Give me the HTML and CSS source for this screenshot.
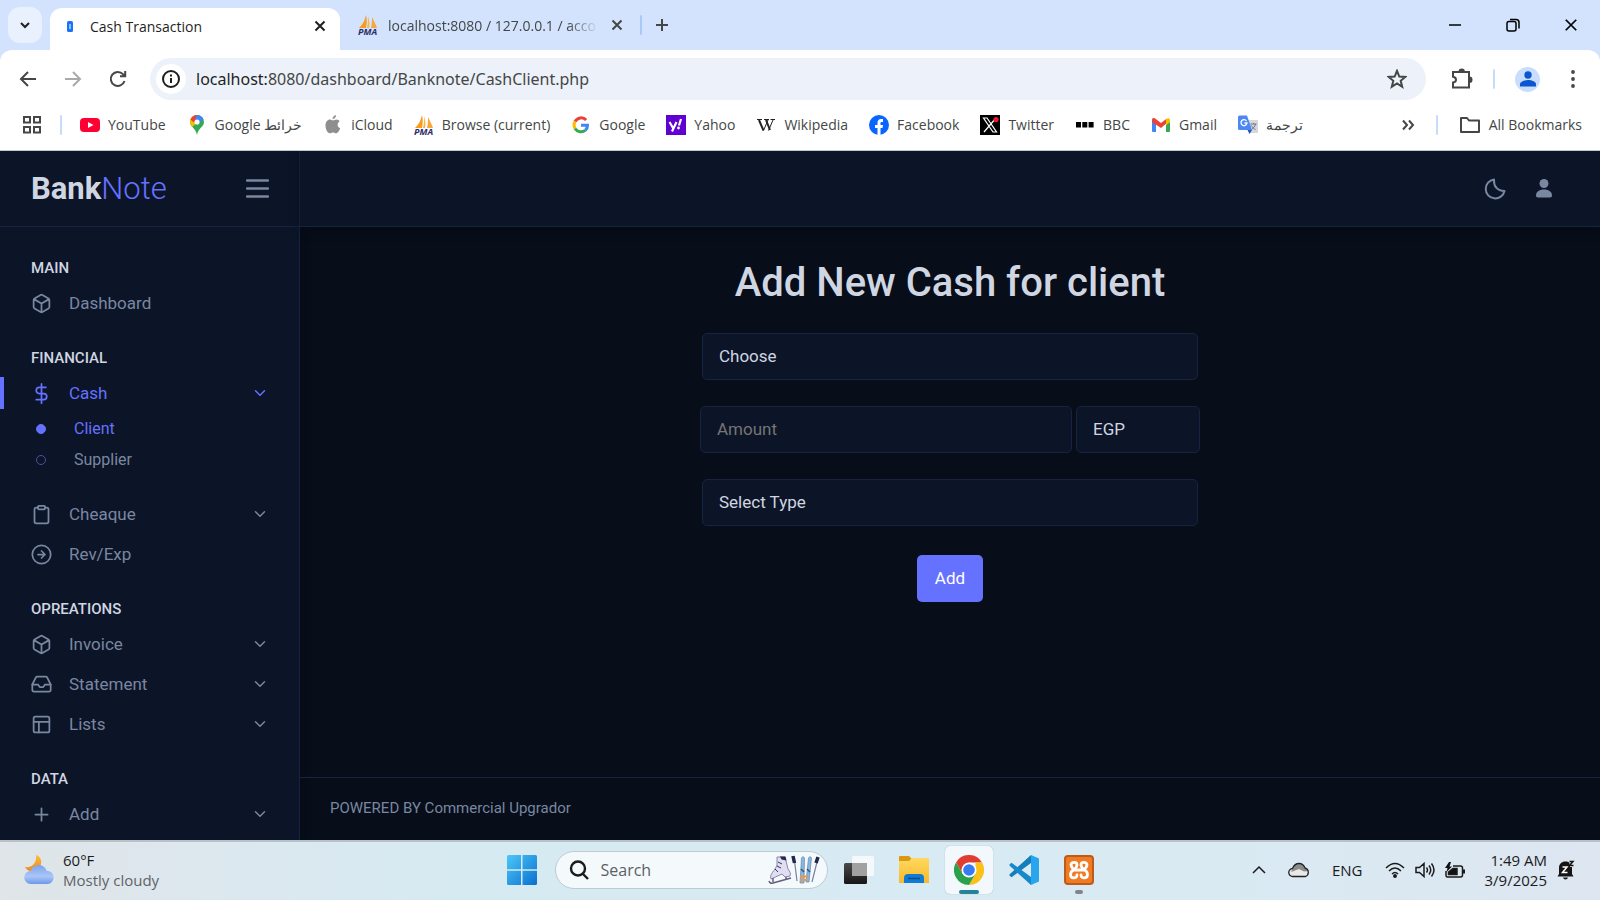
FILE: index.html
```html
<!DOCTYPE html>
<html lang="en">
<head>
<meta charset="utf-8">
<title>Cash Transaction</title>
<link rel="stylesheet" href="styles.css">
</head>
<body>
<svg width="0" height="0" class="defs" aria-hidden="true">
  <defs>
    <linearGradient id="gWin" x1="0" y1="0" x2="1" y2="1"><stop offset="0" stop-color="#4cc8f8"/><stop offset="1" stop-color="#0a6fd0"/></linearGradient>
    <linearGradient id="gMoon" x1="0" y1="0" x2="0" y2="1"><stop offset="0" stop-color="#fbbd3c"/><stop offset="1" stop-color="#ee8a1c"/></linearGradient>
    <linearGradient id="gCloud" x1="0" y1="0" x2="0" y2="1"><stop offset="0" stop-color="#7ea3ee"/><stop offset=".6" stop-color="#a9c6f8"/><stop offset="1" stop-color="#6f97e6"/></linearGradient>
    <linearGradient id="gFolder" x1="0" y1="0" x2="0" y2="1"><stop offset="0" stop-color="#ffd860"/><stop offset="1" stop-color="#f7b92c"/></linearGradient>
    <linearGradient id="gDark" x1="0" y1="0" x2="0" y2="1"><stop offset="0" stop-color="#4a4a4a"/><stop offset="1" stop-color="#161616"/></linearGradient>
    <symbol id="pma" viewBox="0 0 20 20">
      <path d="M8 0c1 4 1 8 0 13H1C5 9 7 5 8 0z" fill="#f89c1c"/><path d="M10 1c1 4 2 8 1 12H9C10 9 10 5 10 1z" fill="#fbb24a"/><path d="M14 2c2 4 4 8 5 11h-6c1-4 1-7 1-11z" fill="#f8a73a"/>
      <text x="0" y="20" class="pma-text">PMA</text>
    </symbol>
    <symbol id="chev" viewBox="0 0 24 24"><path d="m6 9 6 6 6-6"/></symbol>
    <symbol id="box" viewBox="0 0 24 24"><path d="M21 16V8a2 2 0 0 0-1-1.730l-7-4a2 2 0 0 0-2 0l-7 4A2 2 0 0 0 3 8v8a2 2 0 0 0 1 1.730l7 4a2 2 0 0 0 2 0l7-4A2 2 0 0 0 21 16zM3.300 7 12 12l8.700-5M12 22V12"/></symbol>
    <symbol id="x" viewBox="0 0 12 12"><path d="m1.500 1.500 9 9m0-9-9 9"/></symbol>
  </defs>
</svg>
<div class="screen">
  <header class="browser">
    <div class="tabs">
      <button class="tab-search" aria-label="Search tabs"><svg class="line bold" width="12" height="12" viewBox="0 0 12 12"><path d="m2 4 4 4 4-4"/></svg></button>
      <div class="tab active">
        <svg width="16" height="18" viewBox="0 0 16 18"><rect x="5" y="4" width="6" height="11" rx="1.500" fill="#1a73ff"/><path d="M8 7v5" stroke="#b9d4ff" stroke-width="1.500"/></svg>
        <span class="tab-title">Cash Transaction</span>
        <button class="tab-close" aria-label="Close tab"><svg class="line bold" width="12" height="12"><use href="#x"/></svg></button>
      </div>
      <div class="tab">
        <svg width="20" height="20"><use href="#pma"/></svg>
        <span class="tab-title fade">localhost:8080 / 127.0.0.1 / acco</span>
        <button class="tab-close" aria-label="Close tab"><svg class="line bold" width="12" height="12"><use href="#x"/></svg></button>
      </div>
      <i class="divider"></i>
      <button class="new-tab" aria-label="New tab"><svg class="line bold" width="14" height="14" viewBox="0 0 14 14"><path d="M7 1v12M1 7h12"/></svg></button>
      <div class="window-controls">
        <button aria-label="Minimize"><svg class="line" width="14" height="14" viewBox="0 0 14 14"><path d="M1 7h12"/></svg></button>
        <button aria-label="Restore"><svg class="line" width="14" height="14" viewBox="0 0 14 14"><rect x="1" y="3.500" width="9" height="9.500" rx="2"/><path d="M4 1.500h6a3 3 0 0 1 3 3v6"/></svg></button>
        <button aria-label="Close"><svg class="line" width="14" height="14"><use href="#x"/></svg></button>
      </div>
    </div>
    <div class="toolbar">
      <button aria-label="Back"><svg class="line bold" width="18" height="18" viewBox="0 0 18 18"><path d="M17 9H2m7-7L2 9l7 7"/></svg></button>
      <button class="off" aria-label="Forward"><svg class="line bold" width="18" height="18" viewBox="0 0 18 18"><path d="M1 9h15M9 2l7 7-7 7"/></svg></button>
      <button aria-label="Reload"><svg class="line bold" width="18" height="18" viewBox="0 0 18 18"><path d="M15.500 11A7 7 0 1 1 14 4.200L16 6M16.200 1v5.300H11"/></svg></button>
      <div class="omnibox">
        <button class="site-info" aria-label="Site information"><svg class="line bold" width="18" height="18" viewBox="0 0 18 18"><circle cx="9" cy="9" r="8"/><path d="M9 8v5M9 4.500v2"/></svg></button>
        <span class="url"><b>localhost:</b>8080/dashboard/Banknote/CashClient.php</span>
        <button aria-label="Bookmark this tab"><svg class="line bold" width="20" height="20" viewBox="0 0 20 20"><path d="m10 1.800 2.300 5.700 6 .4-4.600 3.900 1.500 6L10 14.500l-5.200 3.300 1.500-6L1.700 7.900l6-.4z"/></svg></button>
      </div>
      <div class="tools">
        <button aria-label="Extensions"><svg class="line bold" width="22" height="22" viewBox="0 0 22 22"><path d="M2 4h16v15.500H2v-5c2-.3 3-1.200 3-2.800S4 9 2 8.700z"/><path d="M8.500 3.500a2.200 2 0 0 1 4.400 0zM18.500 9.500a2 2.200 0 0 1 0 4.400z" fill="currentColor"/></svg></button>
        <i class="divider"></i>
        <button class="profile" aria-label="Profile"><svg width="16" height="16" viewBox="0 0 16 16" fill="#0b57d0"><circle cx="8" cy="4" r="3.700"/><path d="M0 15.500V13c0-2 4-4 8-4s8 2 8 4v2.500z"/></svg></button>
        <button class="kebab" aria-label="Menu"><svg width="18" height="18" viewBox="0 0 18 18" fill="currentColor"><circle cx="9" cy="2" r="1.900"/><circle cx="9" cy="9" r="1.900"/><circle cx="9" cy="16" r="1.900"/></svg></button>
      </div>
    </div>
    <nav class="bookmarks">
      <button class="apps" aria-label="Apps"><svg class="line bold" width="20" height="20" viewBox="0 0 20 20"><path d="M2 2h6v5.500H2zM12 2h6v5.500h-6zM2 12h6v5.500H2zM12 12h6v5.500h-6z"/></svg></button>
      <i class="divider"></i>
      <a class="first" href="#"><svg width="20" height="20" viewBox="0 0 20 20"><rect y="3" width="20" height="14" rx="4" fill="#f03"/><path d="m8 7 5.500 3L8 13z" fill="#fff"/></svg>YouTube</a>
      <a href="#"><svg width="20" height="20" viewBox="0 0 20 20"><path d="M3 7a7 7 0 0 1 14 0c0 5-6 6-7 13-1-7-7-8-7-13z" fill="#34a853"/><path d="M3 7a7 7 0 0 1 4-6.200L12 6 5 12C4 10 3 9 3 7z" fill="#fbbc04"/><path d="M3.500 4.500A7 7 0 0 1 12 .4L7.500 8z" fill="#ea4335"/><path d="M10 0a7 7 0 0 1 6.500 4.500L11 9 8 4z" fill="#4285f4"/><circle cx="10" cy="7" r="2.600" fill="#fff"/></svg><span>Google <bdi lang="ar">خرائط</bdi></span></a>
      <a href="#"><svg width="20" height="20" viewBox="0 0 20 20" fill="#8e8e8e"><path d="M13 0c0 2.500-1.500 4-3.500 4.200C9.500 2 11 .4 13 0zM10 5.500c1 0 2-1 3.500-1 1.200 0 2.500.7 3.200 1.800-3 2-2.500 5.700.5 7-.8 2.200-2.200 5-4 5-1.200 0-1.700-.8-3.200-.8s-2 .8-3.200.8C4.500 18.300 2.500 14 2.500 10.500 2.500 7 4.500 4.500 7 4.500c1.200 0 2.200 1 3 1z"/></svg>iCloud</a>
      <a href="#"><svg width="20" height="20"><use href="#pma"/></svg>Browse (current)</a>
      <a href="#"><svg width="20" height="20" viewBox="0 0 20 20" fill="none" stroke-width="3"><path d="M15.200 5A7 7 0 0 0 4 6.500" stroke="#ea4335"/><path d="M4 6.500a7 7 0 0 0 0 7" stroke="#fbbc04"/><path d="M4 13.500a7 7 0 0 0 10.500 1.700" stroke="#34a853"/><path d="M14.500 15.200c1.300-1.200 2-2.800 2-5H10" stroke="#4285f4"/></svg>Google</a>
      <a href="#"><svg width="20" height="20" viewBox="0 0 20 20"><path fill="#5f01d1" d="M0 0h20v20H0z"/><path d="m3.500 7 3.500 6m3.500-6L6 16.500M15 4l-2 6.500" stroke="#fff" stroke-width="2.200" fill="none"/><circle cx="12.500" cy="13" r="1.400" fill="#fff"/></svg>Yahoo</a>
      <a href="#"><svg width="20" height="20" viewBox="0 0 20 20" fill="none" stroke="#222"><path d="M1 4.500h5M8 4.500h5M14.500 4.500H19M12.500 15.500 17 5" stroke-width="1"/><path d="m3 5 4.500 10.500M10 5l4 10" stroke-width="2"/><path d="M7.500 15.500 12 5" /></svg>Wikipedia</a>
      <a href="#"><svg width="20" height="20" viewBox="0 0 20 20"><circle cx="10" cy="10" r="10" fill="#0866ff"/><path d="M8.500 20v-7H6v-3h2.500V8c0-2.800 1.300-4 3.800-4l1.700.1V7h-1.200C11.700 7 11.500 7.500 11.500 8.300V10H14l-.5 3h-2v7z" fill="#fff"/></svg>Facebook</a>
      <a href="#"><svg width="20" height="20" viewBox="0 0 20 20"><path d="M0 0h20v20H0z"/><path d="M3.500 3h3.500l9.500 14H13zM16 3 4 17" stroke="#fff" stroke-width="1.200" fill="none"/><circle cx="16" cy="4.500" r="2.600" fill="#f01828"/></svg>Twitter</a>
      <a href="#"><svg width="20" height="20" viewBox="0 0 20 20"><path d="M1 7h5v5.500H1zM7.300 7h5v5.500h-5zM13.600 7h5v5.500h-5z"/></svg>BBC</a>
      <a href="#"><svg width="20" height="20" viewBox="0 0 20 20"><path d="M1 5h4v12H2a1 1 0 0 1-1-1z" fill="#4285f4"/><path d="M15 5h4v11a1 1 0 0 1-1 1h-3z" fill="#34a853"/><path d="M1 5c0-2 2-2.500 3.500-1.300L10 8l5.500-4.300L17 7l-7 6-9-6z" fill="#ea4335"/><path d="M15 4c2-1.500 4-.7 4 1v2l-4 3.500z" fill="#fbbc04"/></svg>Gmail</a>
      <a href="#"><svg width="20" height="20" viewBox="0 0 20 20"><path d="M8 5h12v13H12z" fill="#d5d7da"/><path d="M0 2a1.500 1.500 0 0 1 1.500-1.500H9L14 15H1.500A1.500 1.500 0 0 1 0 13.500z" fill="#4a89f3"/><path d="M9.500 15H14l-2.500 4z" fill="#2a50b8"/><path d="M8.500 6A3 3 0 1 0 9 8H6.500" fill="none" stroke="#fff" stroke-width="1.300"/><path d="M12.500 9h6M15.500 8v1m2 0c-.5 3-2 4-4 5.500m0-4c1 2 2.500 3.500 4 4" fill="none" stroke="#68778c"/></svg><bdi lang="ar">ترجمة</bdi></a>
      <button class="more" aria-label="More bookmarks"><svg class="line bold" width="14" height="14" viewBox="0 0 14 14"><path d="m2 2.500 4 4.500-4 4.500m6-9L12 7l-4 4.500"/></svg></button>
      <i class="divider"></i>
      <a href="#"><svg class="line bold" width="22" height="20" viewBox="0 0 22 20"><path d="M2 3h6l2 2.500h10V17H2z" stroke-linejoin="round"/></svg>All Bookmarks</a>
    </nav>
  </header>

  <div class="app">
    <aside class="sidebar">
      <div class="brand-bar">
        <a class="brand" href="#">Bank<span>Note</span></a>
        <button class="burger" aria-label="Toggle sidebar"><svg width="23" height="19" viewBox="0 0 23 19"><path d="M1 1.500h21M1 9.500h21M1 17.500h21" stroke="#7987a1" stroke-width="2.300" stroke-linecap="round"/></svg></button>
      </div>
      <nav class="menu">
        <h2>MAIN</h2>
        <a class="item" href="#"><svg class="feather"><use href="#box"/></svg>Dashboard</a>
        <h2>FINANCIAL</h2>
        <a class="item current" href="#"><svg class="feather" viewBox="0 0 24 24"><path d="M12 1v22M17 5H9.500a3.500 3.500 0 0 0 0 7h5a3.500 3.500 0 0 1 0 7H6"/></svg>Cash<svg class="arrow"><use href="#chev"/></svg></a>
        <div class="submenu">
          <a class="chosen" href="#">Client</a>
          <a href="#">Supplier</a>
        </div>
        <a class="item" href="#"><svg class="feather" viewBox="0 0 24 24"><path d="M16 4h2a2 2 0 0 1 2 2v14a2 2 0 0 1-2 2H6a2 2 0 0 1-2-2V6a2 2 0 0 1 2-2h2"/><rect x="8" y="2" width="8" height="4" rx="1"/></svg>Cheaque<svg class="arrow"><use href="#chev"/></svg></a>
        <a class="item" href="#"><svg class="feather" viewBox="0 0 24 24"><circle cx="12" cy="12" r="10.500"/><path d="m12 16 4-4-4-4M8 12h8"/></svg>Rev/Exp</a>
        <h2>OPREATIONS</h2>
        <a class="item" href="#"><svg class="feather"><use href="#box"/></svg>Invoice<svg class="arrow"><use href="#chev"/></svg></a>
        <a class="item" href="#"><svg class="feather" viewBox="0 0 24 24"><path d="M22.500 12H16l-2 3h-4l-2-3H1.500"/><path d="M5.450 4.110 1.500 12v6a2 2 0 0 0 2 2h17a2 2 0 0 0 2-2v-6l-3.950-7.890A2 2 0 0 0 16.760 3H7.240a2 2 0 0 0-1.790 1.110z"/></svg>Statement<svg class="arrow"><use href="#chev"/></svg></a>
        <a class="item" href="#"><svg class="feather" viewBox="0 0 24 24"><rect x="3" y="3" width="18" height="18" rx="2"/><path d="M3 9h18M9 21V9"/></svg>Lists<svg class="arrow"><use href="#chev"/></svg></a>
        <h2>DATA</h2>
        <a class="item" href="#"><svg class="feather" viewBox="0 0 24 24"><path d="M12 5v14M5 12h14"/></svg>Add<svg class="arrow"><use href="#chev"/></svg></a>
      </nav>
    </aside>
    <div class="page">
      <div class="navbar">
        <button aria-label="Dark mode"><svg class="moon" viewBox="0 0 22 22"><path d="M20.500 13A9.500 9.500 0 1 1 10 1.500C9.500 8 13 13 20.500 13z"/></svg></button>
        <button aria-label="Account"><svg width="16" height="19" viewBox="0 0 16 19" fill="currentColor"><circle cx="8" cy="4.500" r="4.500"/><path d="M0 16.500C0 13 3 10.500 8 10.500s8 2.500 8 6c0 1.300-.7 2-2 2H2c-1.300 0-2-.7-2-2z"/></svg></button>
      </div>
      <main>
        <form class="form">
          <h1>Add New Cash for client</h1>
          <select class="field inset" aria-label="Client"><option>Choose</option></select>
          <div class="row">
            <input class="field" type="text" placeholder="Amount" aria-label="Amount">
            <select class="field" aria-label="Currency"><option>EGP</option></select>
          </div>
          <select class="field inset" aria-label="Type"><option>Select Type</option></select>
          <button class="submit" type="button">Add</button>
        </form>
      </main>
      <footer>POWERED BY Commercial Upgrador</footer>
    </div>
  </div>

  <footer class="taskbar">
    <div class="weather">
      <svg width="32" height="32" viewBox="0 0 32 32"><path d="M13 1c4 1 6 5 5 9s-5 8-10 7c-3 0-5-2-6-4 7 1 12-4 11-12z" fill="url(#gMoon)"/><path d="M8 30a6.500 6.500 0 0 1-.5-13C9 13 12 11 15.500 11c4 0 7 2.300 8 5.700A6.700 6.700 0 0 1 25 30z" fill="url(#gCloud)"/></svg>
      <p>60°F<br><span>Mostly cloudy</span></p>
    </div>
    <div class="dock">
      <button aria-label="Start"><svg width="30" height="30" viewBox="0 0 30 30" fill="url(#gWin)"><path d="M1.500 0H14v14.300H0V1.500Q0 0 1.500 0zM15.500 0h13Q30 0 30 1.500v12.800H15.500zM0 15.800h14V30H1.500Q0 30 0 28.500zM15.500 15.800H30v12.700q0 1.500-1.500 1.500h-13z"/></svg></button>
      <label class="search">
        <svg class="line heavy" width="20" height="20" viewBox="0 0 20 20"><circle cx="9" cy="8.500" r="7"/><path d="m14 14 5 5"/></svg>
        <input type="text" placeholder="Search" aria-label="Search">
        <svg width="52" height="30" viewBox="0 0 52 30" fill="none"><path d="M9 2h8l3 12c2 3 3 4 2 7l-5 1-3-3-11 5c-2-5 4-8 6-14z" fill="#e0def2" stroke="#8a86ad"/><path d="M12 1.500h5.500l1 4-5-1z" fill="#2b274d"/><path d="m10 7 4 2m-5 2 4 2m-6 1 3 3" stroke="#39355e"/><path d="M5 23v4m13-5v3M1 26q1 3 4 2l18-5" stroke="#655f7b" stroke-width="1.500"/><path d="m26 2 3 24M50 3l-6 24" stroke="#7780a4" stroke-width="1.200"/><path d="m25 1 1.500 7M50 2l-2 6" stroke="#20284b" stroke-width="3.500"/><path d="M33.500 3q1.500-3 3 0l-.5 25h-4zM40.500 3q1.500-3 3 0L41 27h-3z" fill="#8eb5dc" stroke="#5d8bb5" stroke-width=".7"/><path d="M33 14l3 3m3-3 3 3" stroke="#32567e" stroke-width="1.500"/><path d="M32 21.500h8M32 25h7" stroke="#ec974d" stroke-width="2"/></svg>
      </label>
      <button aria-label="Task view"><svg width="32" height="30" viewBox="0 0 32 30"><rect x="1" y="8" width="23" height="21" rx="1.500" fill="url(#gDark)"/><rect x="9" y="1" width="22" height="20" rx="1.500" fill="#fff" fill-opacity=".7"/><path d="M9 8h15v13H9z" fill="#a1a1a1"/></svg></button>
      <button aria-label="File Explorer"><svg width="30" height="30" viewBox="0 0 30 30"><path d="M0 2q0-1 1-1h9l4 4h-2v4H0z" fill="#d99a0f"/><path d="M0 6h10l3-3h16q1 0 1 1v24H0z" fill="url(#gFolder)"/><path d="M5 28v-5q0-4 4-4h12q4 0 4 4v5z" fill="#117bd1"/><path d="M9 23.500h12" stroke="#0b4b91" stroke-width="1.500"/></svg></button>
      <button class="open" aria-label="Chrome"><svg width="30" height="30" viewBox="0 0 30 30"><path d="M2 7.500A15 15 0 0 1 28 7.500H15L8.500 18.700z" fill="#e13c30"/><path d="M28 7.500A15 15 0 0 1 15 30l6.500-11.200V7.500z" fill="#fbc116"/><path d="M2 7.500A15 15 0 0 0 15 30l6.500-11.200H8.500z" fill="#2aa24b"/><circle cx="15" cy="15" r="7.500" fill="#fff"/><circle cx="15" cy="15" r="5.800" fill="#367cf0"/></svg></button>
      <button aria-label="Visual Studio Code"><svg width="30" height="30" viewBox="0 0 30 30"><path d="M22 0 1.500 18.500Q-.5 20 1 21l1.500 1.300L22 8z" fill="#147dbb"/><path d="M22 30 1.500 11.500Q-.5 10 1 9l1.500-1.300L22 22z" fill="#1888cd"/><path d="m22 0 8 3.500v23L22 30z" fill="#29a5ed"/></svg></button>
      <button class="running" aria-label="XAMPP"><svg width="30" height="30" viewBox="0 0 30 30"><rect x="1" y="1" width="28" height="28" rx="3" fill="#f17a24" stroke="#bd5c19" stroke-width="2"/><path d="M7 9.500C8 6.500 13 6.500 13 10c0 2-1.500 3-2.500 4.500C8 15.500 6.500 17 6.500 19.500 6.500 24 13 24 13 20M23 9.500C22 6.500 17 6.500 17 10c0 2 1.500 3 2.500 4.500 2.500 1 4 2.500 4 5C23.500 24 17 24 17 20M10 15h10M7 9.500q0 3 3.500 5M23 9.500q0 3-3.500 5" stroke="#fff" stroke-width="2.800" stroke-linecap="round" fill="none"/></svg></button>
    </div>
    <div class="tray">
      <svg class="line" width="14" height="14" viewBox="0 0 14 14"><path d="m1 10 6-6 6 6"/></svg>
      <svg width="22" height="16" viewBox="0 0 22 16"><path d="M5 14.500a4 4 0 0 1-.5-8C6 3 8 1.500 11 1.500s5 2 6 4.500a4.500 4.500 0 0 1 .5 8.500z" fill="#e9e9e9"/><path d="M4.500 7C6 3.500 8 2 11 2s5 2 5.500 4l3.500 3-4 .5L11 7 3 10z" fill="#8b8b8b"/><path d="M5 14.500a4 4 0 0 1-.5-8C6 3 8 1.500 11 1.500s5 2 6 4.500a4.500 4.500 0 0 1 .5 8.500z" fill="none" stroke="#222" stroke-width="1.300"/></svg>
      <span>ENG</span>
      <div class="status">
        <svg class="line" width="20" height="16" viewBox="0 0 20 16"><path d="M1 6q9-9 18 0M4 9q6-6 12 0M7 12q3-3 6 0" /><circle cx="10" cy="14" r="1.200" fill="#111"/></svg>
        <svg class="line" width="20" height="16" viewBox="0 0 20 16"><path d="M1 5.500h3.500L9 1.500v13l-4.500-4H1zM11.500 5.500q2 2.500 0 5M14 3.500q3.500 4.500 0 9M16.500 1.500q5 6.500 0 13"/></svg>
        <svg class="line" width="20" height="17" viewBox="0 0 20 17"><path d="M8 4h7.500a2 2 0 0 1 2 2v7a2 2 0 0 1-2 2h-13a1.500 1.500 0 0 1-1.500-1.500V9"/><path d="M8 6.500h4v6H3.500V10z" fill="#111"/><path d="M19 7.500v4" stroke-width="2"/><path d="M4 0 0 6h2.500L1.500 10 7 4.500H4.500L6 0z" fill="#111" stroke="none"/></svg>
      </div>
      <p>1:49 AM<br>3/9/2025</p>
      <svg class="bell" width="18" height="20" viewBox="0 0 18 20"><path d="M2 14V8c0-4 2.500-6.500 6.500-6.500S15 4 15 8v6l1.500 2.500H.5zM6 17.500h5q-.5 2-2.500 2T6 17.500z" fill="#151515"/><path d="M12 0h6v7h-5z" fill="#dce8f2"/><path d="M5.500 7h4.500l-4.500 5.500h5" fill="none" stroke="#fff" stroke-width="1.500"/><path d="M12.500 1.500H16l-3.500 4h4" fill="none" stroke="#151515" stroke-width="1.500"/></svg>
    </div>
  </footer>
</div>
</body>
</html>
```
FILE: styles.css
```css
* { box-sizing: border-box; }
body { margin: 0; font-family: Roboto, sans-serif; }
button { border: 0; padding: 0; background: none; color: inherit; font: inherit; display: flex; align-items: center; justify-content: center; }
a { color: inherit; text-decoration: none; }
p, h1, h2 { margin: 0; }
svg { flex: none; }
.defs { position: absolute; }
.line { fill: none; stroke: currentColor; stroke-width: 1.5; }
.bold { stroke-width: 2; }
.heavy { stroke-width: 2.4; }
.pma-text { font: italic 700 9px "Open Sans", sans-serif; fill: #2b2d66; }

.screen { height: 100vh; display: flex; flex-direction: column; overflow: hidden; }

/* Browser chrome */
.browser { background: #d3e3fd; color: #444746; font-family: "Open Sans", "Noto Sans", sans-serif; flex: none; }
.divider { width: 2px; height: 20px; border-radius: 1px; background: #c7dcfb; flex: none; }
.tabs .divider { background: #a8c7fa; }
.tabs { height: 50px; padding: 0 0 0 8px; display: flex; align-items: center; }
.tab-search { width: 34px; height: 36px; border-radius: 12px; background: #e9f1fe; color: #1f1f1f; margin-right: 8px; }
.tab { width: 300px; height: 42px; padding: 0 15px 0 18px; display: flex; align-items: center; gap: 10px; font-size: 14px; }
.tab.active { width: 290px; background: #fff; color: #1f1f1f; border-radius: 12px 12px 0 0; align-self: flex-end; gap: 12px; padding: 0 12px 6px; }
.tab-title { flex: 1; min-width: 0; white-space: nowrap; }
.fade { mask-image: linear-gradient(90deg, #000 85%, transparent); }
.tab-close { width: 16px; height: 20px; }
.new-tab { width: 40px; height: 36px; }
.window-controls { margin-left: auto; display: flex; color: #000; }
.window-controls button { width: 58px; height: 48px; }
.toolbar { background: #fff; border-radius: 12px 12px 0 0; padding: 8px 18px 0; display: flex; align-items: center; gap: 25px; }
.toolbar > button { width: 20px; }
.off { color: #a9a9a9; }
.omnibox { flex: 1; height: 42px; margin-left: -3px; padding: 0 19px 0 6px; border-radius: 21px; background: #ecf1fa; display: flex; align-items: center; font: 16px "Noto Sans", sans-serif; }
.site-info { width: 30px; height: 30px; border-radius: 50%; background: #fff; color: #1f1f1f; }
.url { flex: 1; padding-left: 10px; white-space: nowrap; }
.url b { font-weight: 400; color: #1f1f1f; }
.tools { display: flex; align-items: center; gap: 20px; }
.profile { width: 25px; height: 25px; border-radius: 50%; background: #c9ddfc; }
.kebab { margin-left: 4px; }
.bookmarks { background: #fff; height: 51px; padding: 0 18px 1px 22px; display: flex; align-items: center; gap: 21px; font-size: 14px; border-bottom: 1px solid #c3c8cc; white-space: nowrap; }
.bookmarks a { display: flex; align-items: center; gap: 8px; }
.apps { margin-right: -3px; }
.bookmarks .first { margin-left: -3px; }
.more { margin-left: auto; }

/* Application */
.app { flex: 1; min-height: 0; display: flex; overflow: hidden; background: #070d19; color: #d0d6e1; }
.sidebar { width: 300px; flex: none; background: #0c1427; border-right: 1px solid #172340; overflow: hidden; box-shadow: 0 8px 10px #0005; }
.brand-bar { height: 76px; padding: 0 30px 0 31px; display: flex; align-items: center; justify-content: space-between; border-bottom: 1px solid #172340; }
.brand { font-size: 31px; font-weight: 700; }
.brand span { color: #6571ff; font-weight: 300; }
.menu { padding-top: 6px; color: #7987a1; }
.menu h2 { padding: 21px 0 0 31px; font-size: 15px; line-height: 29px; font-weight: 500; color: #d0d6e1; }
.item { height: 40px; padding: 0 30px 0 31px; display: flex; align-items: center; gap: 17px; font-size: 17px; }
.feather, .arrow { width: 21px; height: 21px; fill: none; stroke: currentColor; stroke-width: 2; stroke-linecap: round; stroke-linejoin: round; }
.arrow { width: 18px; height: 18px; margin-left: auto; }
.current, .chosen { color: #6571ff; }
.current { background: linear-gradient(#6571ff, #6571ff) 0 50% / 4px 32px no-repeat; }
.submenu { padding: 0 31px 19px 36px; font-size: 16px; line-height: 31px; }
.submenu a { display: flex; align-items: center; gap: 28px; }
.submenu a::before { content: ""; width: 8px; height: 8px; border: 1px solid #49519f; border-radius: 50%; }
.submenu .chosen::before { background: #6571ff; border-color: #6571ff; }
.page { flex: 1; display: flex; flex-direction: column; }
.navbar { height: 76px; padding: 0 48px 0 0; background: #0c1427; border-bottom: 1px solid #172340; display: flex; align-items: center; justify-content: flex-end; gap: 30px; color: #7987a1; box-shadow: 3px 0 10px #0008; }
.moon { width: 22px; height: 22px; fill: none; stroke: currentColor; stroke-width: 2; stroke-linejoin: round; }
main { flex: 1; padding-top: 26px; }
.form { width: 500px; margin: 0 auto; display: flex; flex-direction: column; gap: 26px; }
h1 { font-size: 40px; line-height: 60px; font-weight: 500; text-align: center; margin-bottom: -6px; }
.field { height: 47px; padding: 0 16px 2px; border: 1px solid #172340; border-radius: 5px; background: #0c1427; color: #d0d6e1; font: 17px Roboto, sans-serif; appearance: none; min-width: 0; }
.field::placeholder { color: #757575; opacity: 1; }
.inset { margin: 0 2px; }
.row { display: grid; grid-template-columns: 3fr 1fr; gap: 4px; }
.submit { align-self: center; margin-top: 3px; padding-bottom: 2px; width: 66px; height: 47px; border-radius: 5px; background: #6571ff; color: #fff; font-size: 17px; }
.page footer { height: 63px; padding: 0 30px 2px; border-top: 1px solid #172340; display: flex; align-items: center; color: #7987a1; font-size: 15px; }

/* Taskbar */
.taskbar { height: 60px; flex: none; padding-bottom: 2px; border-top: 2px solid #b9c1c9; background: linear-gradient(90deg, #dfe5e8, #dde7ee 12%, #d6eaf2 28%, #d9eaf3 75%, #dde6f1); display: grid; grid-template-columns: 1fr auto 1fr; align-items: center; color: #1b1b1b; font: 15px/20px "Open Sans", "Noto Sans", sans-serif; }
.weather { padding-left: 23px; display: flex; align-items: center; gap: 8px; }
.weather span { color: #5e6367; }
.dock { display: flex; align-items: center; gap: 7px; }
.dock button { position: relative; width: 48px; height: 48px; border-radius: 5px; }
.search { width: 273px; height: 38px; margin: 0 0 0 2px; padding: 0 7px 0 13px; border: 1px solid #bccbd4; border-radius: 19px; background: #f4f9fc; display: flex; align-items: center; gap: 12px; }
.search input { flex: 1; min-width: 0; padding: 0; border: 0; background: none; font: 16px "Open Sans", sans-serif; }
.search input::placeholder { color: #5c6064; opacity: 1; }
.dock .open { background: #f2f8fc; box-shadow: 0 0 1px #8ca3b0; }
.open::after, .running::after { content: ""; position: absolute; bottom: 0; width: 20px; height: 4px; border-radius: 2px; background: #258399; }
.running::after { width: 8px; background: #808689; }
.tray { padding-right: 25px; display: flex; align-items: center; justify-content: flex-end; gap: 22px; }
.status { display: flex; gap: 10px; }
.tray p { text-align: right; margin-left: -2px; }
.bell { margin-left: -12px; }
```
